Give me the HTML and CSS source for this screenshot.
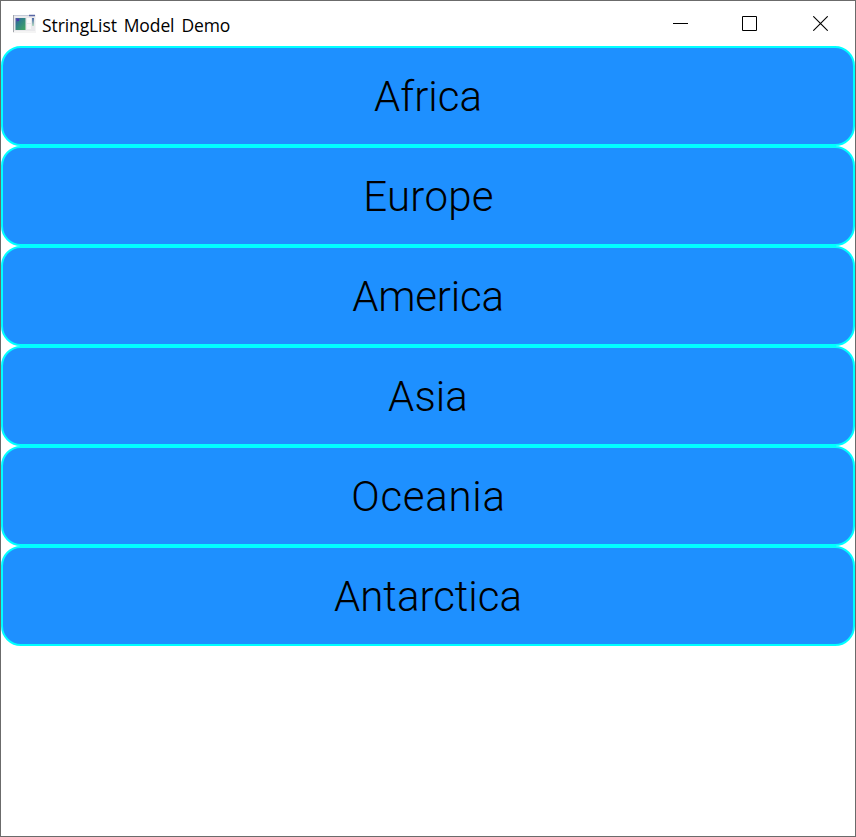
FILE: index.html
```html
<!DOCTYPE html>
<html lang="en">
<head>
<meta charset="utf-8">
<title>StringList Model Demo</title>
<link rel="stylesheet" href="styles.css">
</head>
<body>
<div class="window">
  <header class="titlebar">
    <svg class="app-icon" width="24" height="20" viewBox="0 0 24 20">
      <defs>
        <linearGradient id="pane" x1="0" y1="0" x2="1" y2="1">
          <stop offset="0" stop-color="#5048a8"/>
          <stop offset=".35" stop-color="#2f7f8a"/>
          <stop offset="1" stop-color="#43a860"/>
        </linearGradient>
        <linearGradient id="side" x1="0" y1="0" x2="0" y2="1">
          <stop offset="0" stop-color="#4a68a8"/>
          <stop offset="1" stop-color="#b5dcc0"/>
        </linearGradient>
      </defs>
      <rect x="0" y="1" width="22.500" height="18" fill="#e9e9ec"/>
      <path d="M.5 1v17" stroke="#a4a8ae"/>
      <path d="M1 1.500h21" stroke="#c5cbd8"/>
      <path d="M16 1.500h6" stroke="#5866a4" stroke-width="1.500"/>
      <rect x="2.500" y="4" width="10" height="12" fill="url(#pane)"/>
      <rect x="4" y="5" width="2" height="2" fill="#4b35b0"/>
      <rect x="14" y="4" width="4" height="5" fill="#fafafa"/>
      <rect x="14" y="10" width="4" height="5" fill="#f7f7f7"/>
      <rect x="19" y="4" width="2" height="8" fill="url(#side)"/>
      <path d="M1 18h21" stroke="#f4f4f4" stroke-width="2"/>
    </svg>
    <h1 class="title">StringList Model Demo</h1>
    <div class="controls">
      <svg width="15" height="15" viewBox="0 0 15 15"><path d="M0 7.500h15" stroke="#000"/></svg>
      <svg class="maximize" width="15" height="15" viewBox="0 0 15 15"><path d="M.5.5h14v14H.5z" fill="none" stroke="#000"/></svg>
      <svg width="15" height="15" viewBox="0 0 15 15"><path d="M.3.300l14.400 14.400M14.700.300L.3 14.700" stroke="#000" stroke-width="1.100"/></svg>
    </div>
  </header>
  <ul class="list">
    <li class="item africa">Africa</li>
    <li class="item europe">Europe</li>
    <li class="item america">America</li>
    <li class="item asia">Asia</li>
    <li class="item oceania">Oceania</li>
    <li class="item antarctica">Antarctica</li>
  </ul>
</div>
</body>
</html>
```
FILE: styles.css
```css
* { box-sizing: border-box; }
body { margin: 0; background: #fff; color: #000; }
.window {
  height: 837px;
  border: 1px solid #6b6b6b;
  background: #fff;
}
.titlebar {
  display: flex;
  align-items: center;
  height: 45px;
  padding: 0 27px 0 12px;
}
.app-icon { flex: none; margin-right: 5px; }
.title {
  margin: 2px 0 0;
  font: 400 17.5px/24px "Open Sans", sans-serif;
  letter-spacing: -0.1px;
  word-spacing: 2.5px;
  white-space: nowrap;
}
.controls {
  display: flex;
  gap: 55px;
  margin-left: auto;
}
.maximize { margin: 0 1px 0 -1px; }
.list { margin: 0; padding: 0; list-style: none; }
.item {
  display: flex;
  align-items: center;
  justify-content: center;
  height: 100px;
  padding-top: 2px;
  border: 2px solid #00ffff;
  border-radius: 20px;
  background: #1e90ff;
  font: 300 42px/50px Roboto, sans-serif;
}
.africa { letter-spacing: 0; }
.europe { letter-spacing: 0.3px; padding-left: 1px; }
.america { letter-spacing: -0.2px; }
.asia { letter-spacing: 0.1px; }
.oceania { letter-spacing: 0.7px; padding-left: 1px; }
.antarctica { letter-spacing: 0; }
```
